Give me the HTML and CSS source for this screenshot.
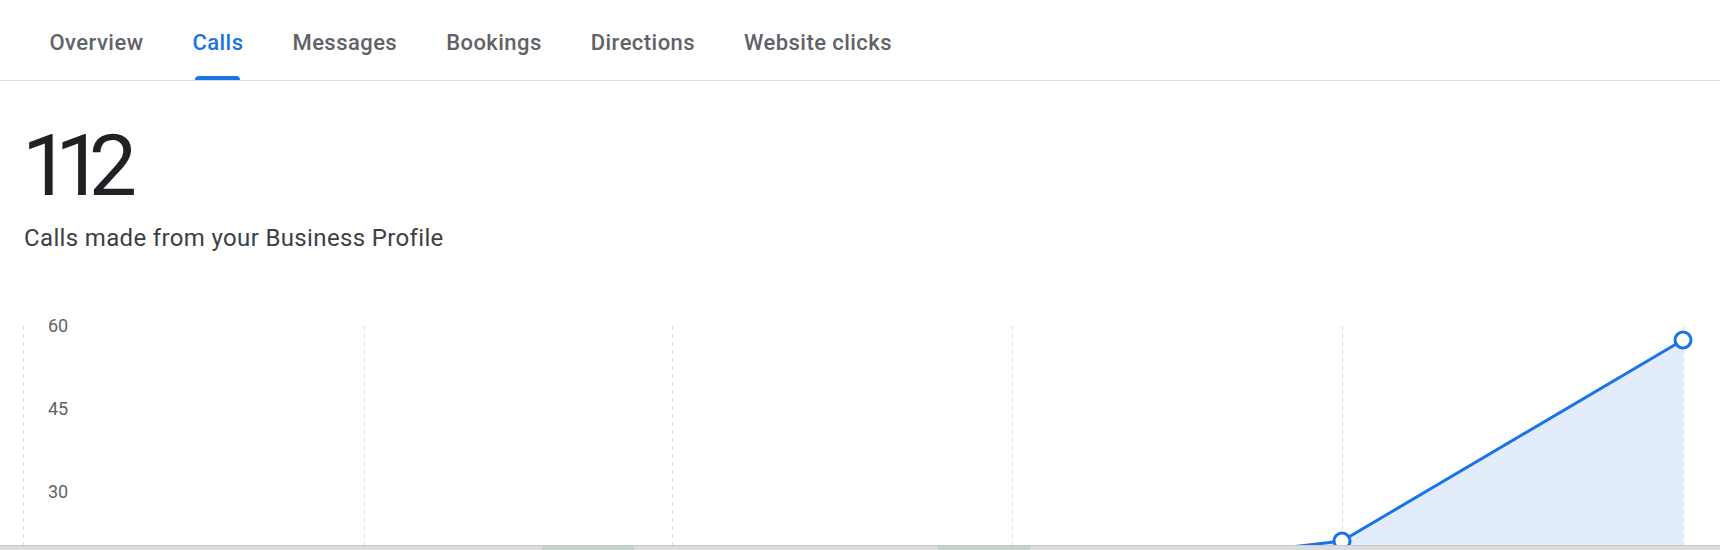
FILE: index.html
```html
<!DOCTYPE html>
<html lang="en">
<head>
<meta charset="utf-8">
<title>Calls</title>
<link rel="stylesheet" href="styles.css">
</head>
<body>
<div class="page">
  <nav class="tabs">
    <a class="tab">Overview</a>
    <a class="tab active">Calls</a>
    <a class="tab">Messages</a>
    <a class="tab">Bookings</a>
    <a class="tab">Directions</a>
    <a class="tab">Website clicks</a>
  </nav>
  <section class="summary">
    <div class="total">112</div>
    <div class="caption">Calls made from your Business Profile</div>
  </section>
  <div class="chart">
    <svg class="chart-svg" width="1720" height="235" viewBox="0 0 1720 235">
      <polygon class="area" points="1012,270 1342,231 1683,30 1683,240 1012,240"/>
      <g class="grid">
        <line x1="23.5" y1="16" x2="23.5" y2="235"/>
        <line x1="364.5" y1="16" x2="364.5" y2="235"/>
        <line x1="672.5" y1="16" x2="672.5" y2="235"/>
        <line x1="1012.5" y1="16" x2="1012.5" y2="235"/>
        <line x1="1342.5" y1="16" x2="1342.5" y2="235"/>
        <line x1="1683.5" y1="16" x2="1683.5" y2="235"/>
      </g>
      <g class="ylabels">
        <text x="48" y="21.5">60</text>
        <text x="48" y="104.5">45</text>
        <text x="48" y="187.5">30</text>
      </g>
      <polyline class="series" points="1012,270 1342,231 1683,30"/>
      <circle class="dot" cx="1342" cy="231" r="8"/>
      <circle class="dot" cx="1683" cy="30" r="8"/>
    </svg>
  </div>
  <div class="scrollbar"></div>
</div>
</body>
</html>
```

FILE: styles.css
```css
html, body {
  margin: 0;
  padding: 0;
  background: #ffffff;
}

.page {
  width: 1720px;
  height: 550px;
  overflow: hidden;
  font-family: Roboto, "Liberation Sans", Arial, sans-serif;
  color: #202124;
}

.tabs {
  display: flex;
  height: 80px;
  padding-left: 25px;
  border-bottom: 1px solid #dadce0;
  box-sizing: content-box;
}

.tab {
  position: relative;
  display: flex;
  align-items: center;
  padding: 4px 24.5px 0;
  font-size: 22px;
  font-weight: 500;
  letter-spacing: 0.45px;
  color: #5f6368;
  text-decoration: none;
}

.tab.active {
  color: #1a73e8;
}

.tab.active::after {
  content: "";
  position: absolute;
  left: 27.5px;
  right: 27.5px;
  bottom: 0;
  height: 4px;
  border-radius: 4px 4px 0 0;
  background: #1a73e8;
}

.summary {
  padding: 0 22px;
}

.total {
  margin-top: 42px;
  font-size: 86px;
  line-height: 86px;
  font-weight: 400;
  letter-spacing: -15px;
  color: #202124;
}

.caption {
  margin-top: 13px;
  padding-left: 2px;
  font-size: 24px;
  line-height: 32px;
  letter-spacing: 0.35px;
  color: #3c4043;
}

.chart {
  margin-top: 56px;
  height: 235px;
  overflow: hidden;
}

.chart-svg {
  display: block;
}

.area {
  fill: #e3ecfb;
}

.grid line {
  stroke: #dadce0;
  stroke-width: 1;
  stroke-dasharray: 4 4;
}

.ylabels text {
  font-family: Roboto, "Liberation Sans", Arial, sans-serif;
  font-size: 18px;
  fill: #5f6368;
}

.series {
  fill: none;
  stroke: #1a73e8;
  stroke-width: 3;
  stroke-linejoin: round;
}

.dot {
  fill: #ffffff;
  stroke: #1a73e8;
  stroke-width: 3;
}

.scrollbar {
  height: 5px;
  border-top: 1px solid #c8c8c8;
  box-sizing: border-box;
  background:
    linear-gradient(to right,
      transparent 0, transparent 542px,
      #c3d3c9 542px, #c3d3c9 634px,
      transparent 634px, transparent 938px,
      #c3d3c9 938px, #c3d3c9 1030px,
      transparent 1030px),
    #dcdcdc;
}
```
